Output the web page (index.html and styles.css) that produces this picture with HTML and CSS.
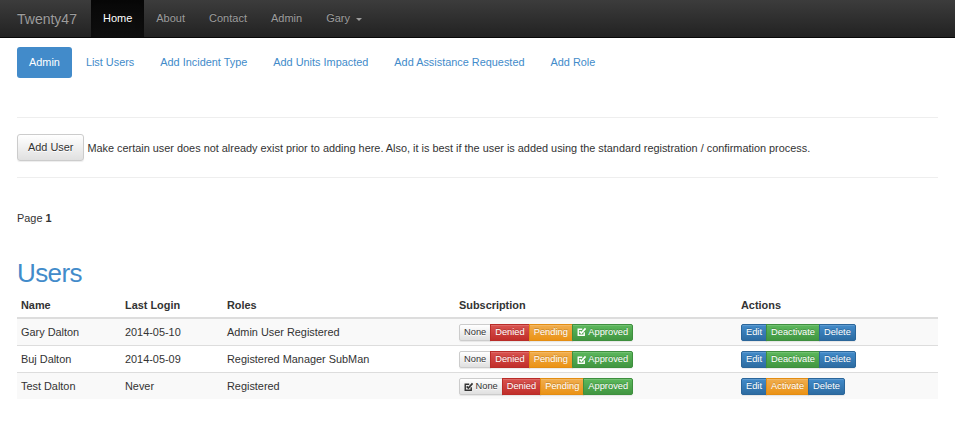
FILE: index.html
```html
<!DOCTYPE html>
<html>
<head>
<meta charset="utf-8">
<title>Twenty47 - Users</title>
<link rel="stylesheet" href="styles.css">
</head>
<body>
<header class="navbar">
  <a class="brand" href="#">Twenty47</a>
  <ul class="nav">
    <li class="active"><a href="#">Home</a></li>
    <li><a href="#">About</a></li>
    <li><a href="#">Contact</a></li>
    <li><a href="#">Admin</a></li>
    <li><a href="#">Gary <span class="caret"></span></a></li>
  </ul>
</header>
<main class="container">
  <ul class="pills">
    <li class="active"><a href="#">Admin</a></li>
    <li><a href="#">List Users</a></li>
    <li><a href="#">Add Incident Type</a></li>
    <li><a href="#">Add Units Impacted</a></li>
    <li><a href="#">Add Assistance Requested</a></li>
    <li><a href="#">Add Role</a></li>
  </ul>
  <hr class="rule rule-top">
  <div class="add-row">
    <button class="btn-add">Add User</button> Make certain user does not already exist prior to adding here. Also, it is best if the user is added using the standard registration / confirmation process.
  </div>
  <hr class="rule rule-bottom">
  <p class="page">Page <b>1</b></p>
  <h1 class="title">Users</h1>
  <table class="users">
    <thead>
      <tr>
        <th class="c-name">Name</th>
        <th class="c-login">Last Login</th>
        <th class="c-roles">Roles</th>
        <th class="c-sub">Subscription</th>
        <th class="c-act">Actions</th>
      </tr>
    </thead>
    <tbody>
      <tr class="odd">
        <td>Gary Dalton</td>
        <td>2014-05-10</td>
        <td>Admin User Registered</td>
        <td><div class="bgroup"><span class="b b-default">None</span><span class="b b-danger">Denied</span><span class="b b-warning">Pending</span><span class="b b-success"><svg class="chk" viewBox="0 0 10 10"><path d="M7.6 5.4V8.7H1.3V2.4H5.5" fill="none" stroke="currentColor" stroke-width="1.5"/><path d="M2.8 4.5L4.6 6.3L9 1.5" fill="none" stroke="currentColor" stroke-width="1.8"/></svg> Approved</span></div></td>
        <td><div class="bgroup"><span class="b b-primary">Edit</span><span class="b b-success">Deactivate</span><span class="b b-primary">Delete</span></div></td>
      </tr>
      <tr>
        <td>Buj Dalton</td>
        <td>2014-05-09</td>
        <td>Registered Manager SubMan</td>
        <td><div class="bgroup"><span class="b b-default">None</span><span class="b b-danger">Denied</span><span class="b b-warning">Pending</span><span class="b b-success"><svg class="chk" viewBox="0 0 10 10"><path d="M7.6 5.4V8.7H1.3V2.4H5.5" fill="none" stroke="currentColor" stroke-width="1.5"/><path d="M2.8 4.5L4.6 6.3L9 1.5" fill="none" stroke="currentColor" stroke-width="1.8"/></svg> Approved</span></div></td>
        <td><div class="bgroup"><span class="b b-primary">Edit</span><span class="b b-success">Deactivate</span><span class="b b-primary">Delete</span></div></td>
      </tr>
      <tr class="odd">
        <td>Test Dalton</td>
        <td>Never</td>
        <td>Registered</td>
        <td><div class="bgroup"><span class="b b-default"><svg class="chk" viewBox="0 0 10 10"><path d="M7.6 5.4V8.7H1.3V2.4H5.5" fill="none" stroke="currentColor" stroke-width="1.5"/><path d="M2.8 4.5L4.6 6.3L9 1.5" fill="none" stroke="currentColor" stroke-width="1.8"/></svg> None</span><span class="b b-danger">Denied</span><span class="b b-warning">Pending</span><span class="b b-success">Approved</span></div></td>
        <td><div class="bgroup"><span class="b b-primary">Edit</span><span class="b b-warning">Activate</span><span class="b b-primary">Delete</span></div></td>
      </tr>
    </tbody>
  </table>
</main>
</body>
</html>
```
FILE: styles.css
```css
* { box-sizing: border-box; }
html, body { margin: 0; padding: 0; background: #fff; }
body {
  font-family: "Liberation Sans", Arial, sans-serif;
  font-size: 10.9px;
  line-height: 16px;
  color: #333;
}
a { text-decoration: none; }

.navbar {
  height: 38px;
  display: flex;
  align-items: stretch;
  background: linear-gradient(#3c3c3c, #222);
  border-bottom: 1px solid #080808;
}
.brand {
  padding: 0 12px 0 17px;
  font-size: 14px;
  line-height: 38px;
  color: #9d9d9d;
  text-shadow: 0 -1px 0 rgba(0,0,0,.25);
}
.nav { list-style: none; margin: 0 0 0 2px; padding: 0; display: flex; }
.nav li a {
  display: block;
  padding: 0 12px;
  line-height: 37px;
  font-size: 11px;
  color: #9d9d9d;
  text-shadow: 0 -1px 0 rgba(0,0,0,.25);
}
.nav li.active a {
  color: #fff;
  background: linear-gradient(#080808, #0f0f0f);
  box-shadow: inset 0 3px 9px rgba(0,0,0,.25);
}
.caret {
  display: inline-block;
  width: 0; height: 0;
  margin-left: 3px;
  vertical-align: middle;
  border-top: 3px solid #9d9d9d;
  border-left: 3px solid transparent;
  border-right: 3px solid transparent;
}

.container { padding: 0 17px; }

.pills { list-style: none; margin: 9px 0 0; padding: 0; display: flex; }
.pills li { margin-right: 2px; }
.pills li a {
  display: block;
  padding: 7px 12px 8px;
  line-height: 16px;
  border-radius: 3px;
  color: #428bca;
}
.pills li.active a {
  color: #fff;
  background: #428bca;
}

.rule { border: 0; border-top: 1px solid #eee; margin: 0; height: 0; }
.rule-top { margin-top: 39px; }
.add-row { margin-top: 16px; display: flex; align-items: center; gap: 3px; }
.btn-add {
  font-family: inherit;
  font-size: 10.9px;
  line-height: 15px;
  padding: 5px 10px;
  color: #333;
  border: 1px solid #ccc;
  border-radius: 3px;
  background: linear-gradient(#fff, #e0e0e0);
  text-shadow: 0 1px 0 #fff;
  box-shadow: inset 0 1px 0 rgba(255,255,255,.15), 0 1px 1px rgba(0,0,0,.075);
}
.rule-bottom { margin-top: 16px; }

.page { margin: 32px 0 0; }

.title {
  margin: 32px 0 0;
  font-size: 26px;
  font-weight: 400;
  line-height: 30px;
  letter-spacing: -0.6px;
  color: #428bca;
}

.users {
  width: 100%;
  margin-top: 2px;
  border-collapse: collapse;
  table-layout: fixed;
}
.users th, .users td {
  text-align: left;
  line-height: 16px;
  vertical-align: middle;
}
.users th { font-weight: 700; border-bottom: 2px solid #ddd; padding: 7px 4px 4px; }
.users td { border-top: 1px solid #ddd; padding: 4px 4px 4.5px; }
.users thead + tbody tr:first-child td { border-top: 0; }
.users tr.odd td { background: #f9f9f9; }
.c-name { width: 104px; }
.c-login { width: 102px; }
.c-roles { width: 232px; }
.c-sub { width: 282px; }

.bgroup { display: inline-flex; vertical-align: middle; }
.b {
  display: inline-flex;
  align-items: center;
  gap: 2px;
  height: 17px;
  padding: 0 4px;
  font-size: 9.3px;
  line-height: 15px;
  border: 1px solid;
  color: #fff;
  text-shadow: 0 -1px 0 rgba(0,0,0,.2);
  box-shadow: inset 0 1px 0 rgba(255,255,255,.15), 0 1px 1px rgba(0,0,0,.075);
}
.b + .b { margin-left: -1px; }
.bgroup .b:first-child { border-radius: 2px 0 0 2px; }
.bgroup .b:last-child { border-radius: 0 2px 2px 0; }
.b-default { color: #333; background: linear-gradient(#fff, #e0e0e0); border-color: #ccc; text-shadow: 0 1px 0 #fff; }
.b-danger { background: linear-gradient(#d9534f, #c12e2a); border-color: #b92c28; }
.b-warning { background: linear-gradient(#f0ad4e, #eb9316); border-color: #e38d13; }
.b-success { background: linear-gradient(#5cb85c, #419641); border-color: #3e8f3e; }
.b-primary { background: linear-gradient(#428bca, #2d6ca2); border-color: #2b669a; }
.chk { width: 9.5px; height: 9.5px; flex: none; }
```
